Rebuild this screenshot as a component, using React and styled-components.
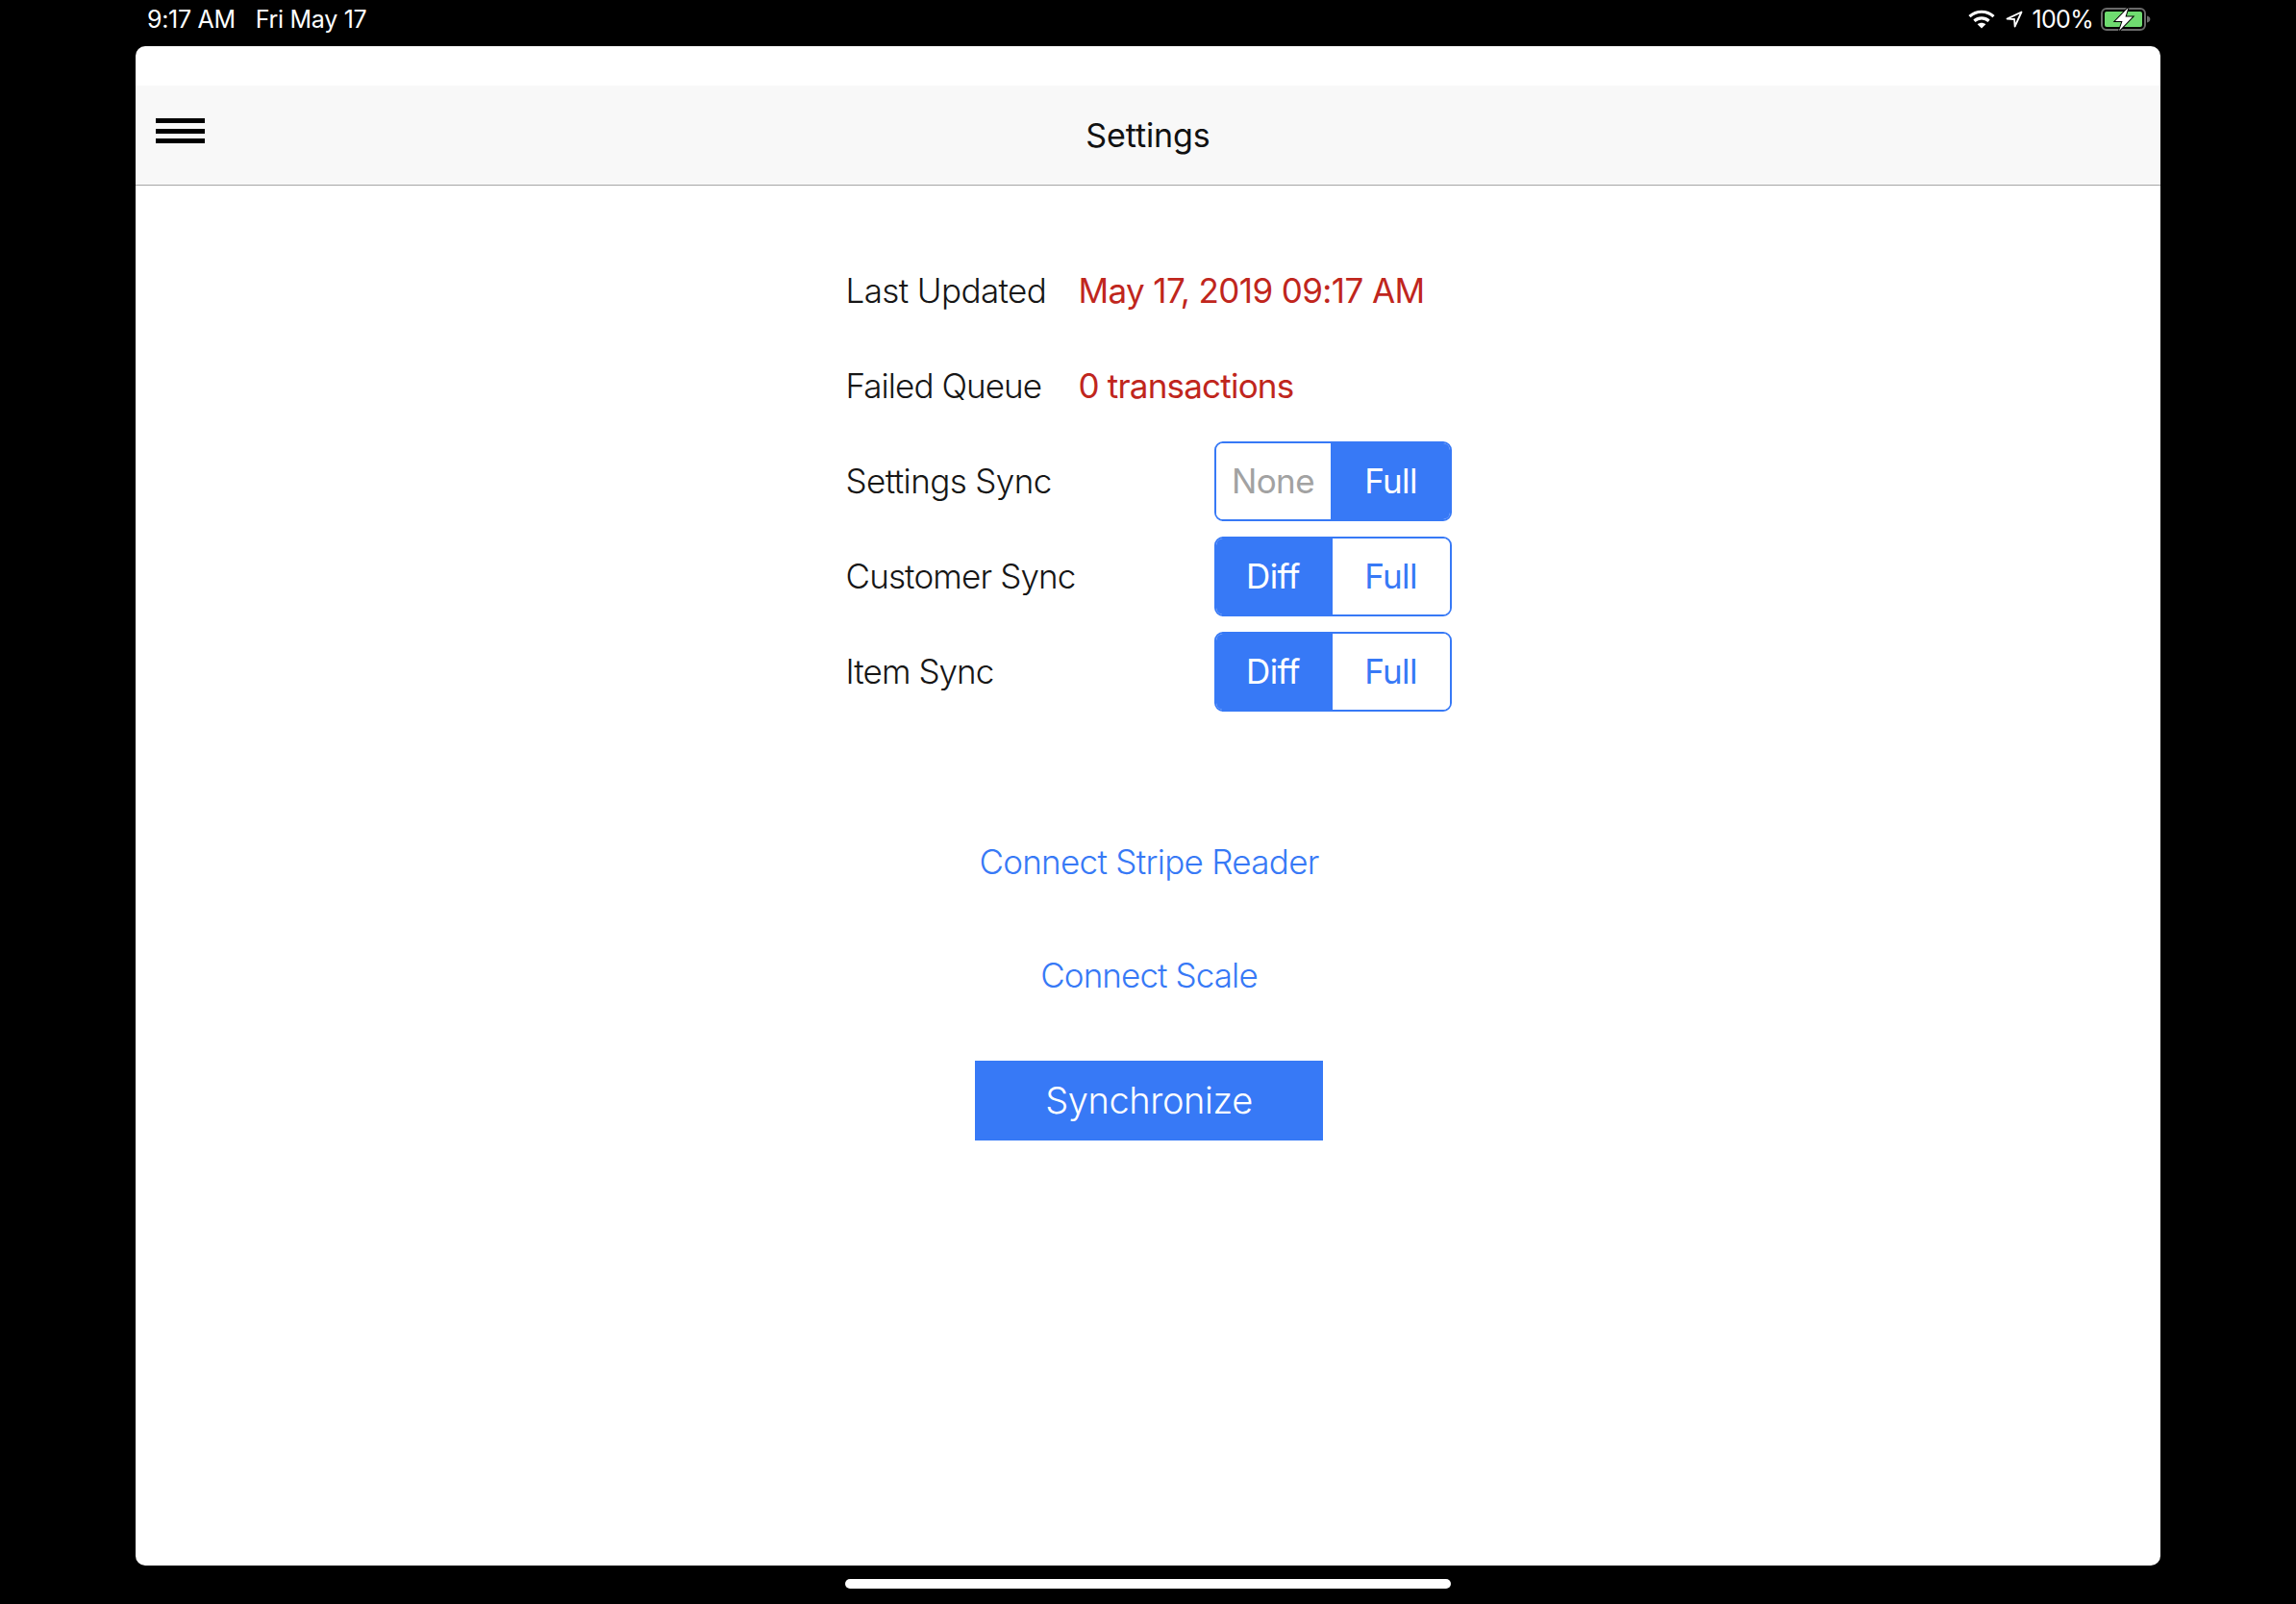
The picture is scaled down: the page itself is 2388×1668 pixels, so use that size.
import React from "react";
import styled, { createGlobalStyle } from "styled-components";

const Global = createGlobalStyle`
  html, body { margin: 0; padding: 0; background: #000; }
  body { font-family: Inter, "Noto Sans", "Liberation Sans", sans-serif; }
`;
const BLUE = "#3779f6";
const Screen = styled.div`
  width: 2388px; height: 1668px; background: #000; display: flex; flex-direction: column; overflow: hidden;
`;
const StatusBar = styled.div`
  height: 48px; padding: 0 151px 9px 153px; display: flex; align-items: center; color: #fff;
  font-size: 25px; letter-spacing: -0.3px; box-sizing: border-box; white-space: nowrap;
`;
const StatusDate = styled.span` margin-left: 21px; `;
const StatusRight = styled.div` margin-left: auto; display: flex; align-items: center; `;
const Percent = styled.span` margin: 0 8px 0 10px; letter-spacing: -0.7px; `;
const Panel = styled.div`
  margin: 0 141px; width: 2106px; height: 1580px; background: #fff; border-radius: 10px;
  display: flex; flex-direction: column; overflow: hidden; padding-top: 41px; box-sizing: border-box;
`;
const Header = styled.header`
  height: 104px; flex: none; box-sizing: border-box; background: #f8f8f8; border-bottom: 1px solid #a6a6a6;
  display: flex; align-items: center; justify-content: center; position: relative;
`;
const Menu = styled.div`
  position: absolute; left: 21px; top: 34px; width: 51px; display: flex; flex-direction: column; gap: 5.5px;
`;
const MenuBar = styled.span` display: block; height: 5px; background: #000; `;
const Title = styled.h1` margin: 0; font-size: 34px; font-weight: 400; color: #111; letter-spacing: -0.1px; `;
const Content = styled.main`
  flex: 1; display: flex; flex-direction: column; align-items: center; padding-top: 68px;
`;
const Form = styled.div` width: 630px; display: flex; flex-direction: column; gap: 16px; margin-left: 1px; `;
const Row = styled.div`
  height: 83px; display: flex; align-items: center; font-size: 35px; letter-spacing: -0.6px; white-space: nowrap;
`;
const Label = styled.span`
  width: 242px; flex: none; color: #161616; font-weight: 300;
  letter-spacing: ${(p) => p.$spacing ?? -0.6}px; padding-bottom: 1px;
`;
const Value = styled.span`
  color: #c0261d; font-weight: 400; letter-spacing: ${(p) => p.$spacing ?? -0.6}px; padding-bottom: 1px;
`;
const Segment = styled.div`
  margin-left: auto; width: 247px; height: 83px; box-sizing: border-box; border: 2px solid ${BLUE}; border-radius: 9px;
  display: flex; overflow: hidden;
`;
const SegmentItem = styled.span`
  display: flex; align-items: center; justify-content: center; padding-bottom: 2px;
  flex: ${(p) => (p.$first ? "0 0 119px" : "1")};
  border-left: ${(p) => (p.$first ? "none" : `2px solid ${BLUE}`)};
  background: ${(p) => (p.$active ? BLUE : "#fff")};
  color: ${(p) => (p.$active ? "#fff" : p.$muted ? "#a2a2a2" : BLUE)};
`;
const LinkButton = styled.div`
  height: 83px; display: flex; align-items: center; justify-content: center; color: ${BLUE};
  font-size: 35px; font-weight: 300; letter-spacing: ${(p) => p.$spacing}px; margin: ${(p) => p.$top}px 0 0 2px;
`;
const PrimaryButton = styled.div`
  width: 362px; height: 83px; margin: 48px 0 0 2px; background: ${BLUE}; color: #fff; font-size: 38px; font-weight: 300;
  display: flex; align-items: center; justify-content: center; letter-spacing: -0.4px; padding-bottom: 1px; box-sizing: border-box;
`;
const HomeRow = styled.div` flex: 1; display: flex; justify-content: center; padding-top: 14px; box-sizing: border-box; `;
const HomeBar = styled.div` width: 630px; height: 10px; border-radius: 5px; background: #fff; `;

const Wifi = () => (
  <svg width="28" height="20" viewBox="0 0 28 20" fill="none" stroke="#fff" strokeWidth="3.2">
    <path d="M1.5 7.2C8.6 .6 19.4 .6 26.5 7.2" />
    <path d="M6.4 11.8c4.4-3.9 10.8-3.9 15.2 0" />
    <path d="M14 19.6l-4.3-4.4c2.5-2 6.1-2 8.6 0z" fill="#fff" stroke="none" />
  </svg>
);
const Location = () => (
  <svg width="18" height="18" viewBox="0 0 18 18" fill="none" stroke="#fff" strokeWidth="1.8" strokeLinejoin="round" style={{ marginLeft: 11 }}>
    <path d="M16.5 1.5L1.5 8.6l7.6.4.5 7.5z" />
  </svg>
);
const Battery = () => (
  <svg width="52" height="24" viewBox="0 0 52 24">
    <rect x="1" y="1" width="45" height="22" rx="5" fill="none" stroke="#6a6a6a" strokeWidth="2" />
    <rect x="4" y="4" width="39" height="16" rx="2" fill="#6fdb70" />
    <path d="M48 8.5c2 .3 3.4 1.6 3.4 3.5s-1.4 3.2-3.4 3.5z" fill="#6a6a6a" />
    <path d="M28.5 0L15 14h7.5L19 24l14-14.5h-7.5z" fill="#fff" stroke="#000" strokeWidth="2" paintOrder="stroke" />
  </svg>
);

const Seg = ({ left, right, active, muted }) => (
  <Segment>
    <SegmentItem $first $active={active === 0} $muted={muted}>{left}</SegmentItem>
    <SegmentItem $active={active === 1}>{right}</SegmentItem>
  </Segment>
);

export default function App() {
  return (
    <Screen>
      <Global />
      <StatusBar>
        <span>9:17 AM</span>
        <StatusDate>Fri May 17</StatusDate>
        <StatusRight>
          <Wifi />
          <Location />
          <Percent>100%</Percent>
          <Battery />
        </StatusRight>
      </StatusBar>
      <Panel>
        <Header>
          <Menu><MenuBar /><MenuBar /><MenuBar /></Menu>
          <Title>Settings</Title>
        </Header>
        <Content>
          <Form>
            <Row><Label>Last Updated</Label><Value>May 17, 2019 09:17 AM</Value></Row>
            <Row><Label $spacing={-0.95}>Failed Queue</Label><Value $spacing={-0.8}>0 transactions</Value></Row>
            <Row><Label>Settings Sync</Label><Seg left="None" right="Full" active={1} muted /></Row>
            <Row><Label $spacing={-0.85}>Customer Sync</Label><Seg left="Diff" right="Full" active={0} /></Row>
            <Row><Label $spacing={-0.95}>Item Sync</Label><Seg left="Diff" right="Full" active={0} /></Row>
          </Form>
          <LinkButton $top={114} $spacing={-0.7}>Connect Stripe Reader</LinkButton>
          <LinkButton $top={35} $spacing={-0.9}>Connect Scale</LinkButton>
          <PrimaryButton>Synchronize</PrimaryButton>
        </Content>
      </Panel>
      <HomeRow><HomeBar /></HomeRow>
    </Screen>
  );
}
